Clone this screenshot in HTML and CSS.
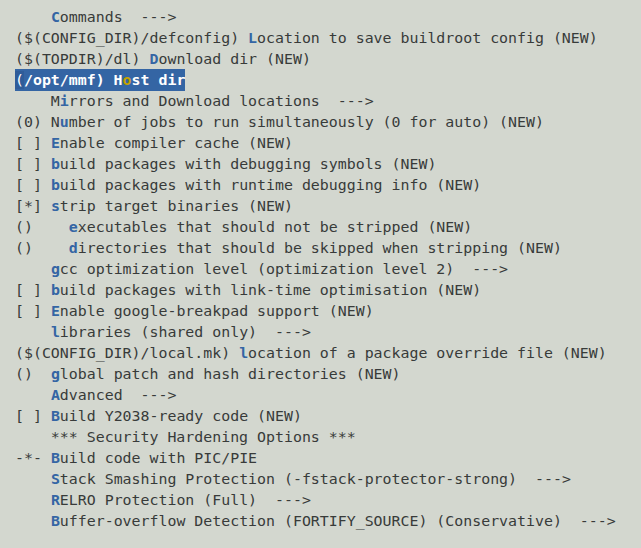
FILE: index.html
```html
<!DOCTYPE html>
<html>
<head>
<meta charset="utf-8">
<link rel="stylesheet" href="styles.css">
</head>
<body>
<div class="term">
<div class="row">    <span class="k">C</span>ommands  ---&gt;</div>
<div class="row">($(CONFIG_DIR)/defconfig) <span class="k">L</span>ocation to save buildroot config (NEW)</div>
<div class="row">($(TOPDIR)/dl) <span class="k">D</span>ownload dir (NEW)</div>
<div class="row"><span class="sel"><span class="cur">(</span>/opt/mmf) H<span class="sk">o</span>st dir</span></div>
<div class="row">    M<span class="k">i</span>rrors and Download locations  ---&gt;</div>
<div class="row">(0) N<span class="k">u</span>mber of jobs to run simultaneously (0 for auto) (NEW)</div>
<div class="row">[ ] <span class="k">E</span>nable compiler cache (NEW)</div>
<div class="row">[ ] <span class="k">b</span>uild packages with debugging symbols (NEW)</div>
<div class="row">[ ] <span class="k">b</span>uild packages with runtime debugging info (NEW)</div>
<div class="row">[*] <span class="k">s</span>trip target binaries (NEW)</div>
<div class="row">()    <span class="k">e</span>xecutables that should not be stripped (NEW)</div>
<div class="row">()    <span class="k">d</span>irectories that should be skipped when stripping (NEW)</div>
<div class="row">    <span class="k">g</span>cc optimization level (optimization level 2)  ---&gt;</div>
<div class="row">[ ] <span class="k">b</span>uild packages with link-time optimisation (NEW)</div>
<div class="row">[ ] <span class="k">E</span>nable google-breakpad support (NEW)</div>
<div class="row">    <span class="k">l</span>ibraries (shared only)  ---&gt;</div>
<div class="row">($(CONFIG_DIR)/local.mk) <span class="k">l</span>ocation of a package override file (NEW)</div>
<div class="row">()  <span class="k">g</span>lobal patch and hash directories (NEW)</div>
<div class="row">    <span class="k">A</span>dvanced  ---&gt;</div>
<div class="row">[ ] <span class="k">B</span>uild Y2038-ready code (NEW)</div>
<div class="row">    *** Security Hardening Options ***</div>
<div class="row">-*- <span class="k">B</span>uild code with PIC/PIE</div>
<div class="row">    <span class="k">S</span>tack Smashing Protection (-fstack-protector-strong)  ---&gt;</div>
<div class="row">    <span class="k">R</span>ELRO Protection (Full)  ---&gt;</div>
<div class="row">    <span class="k">B</span>uffer-overflow Detection (FORTIFY_SOURCE) (Conservative)  ---&gt;</div>
</div>
</body>
</html>
```

FILE: styles.css
```css
html, body {
  margin: 0;
  padding: 0;
  background: #d3d7cf;
}
.term {
  padding: 7px 0 0 15px;
  font-family: "DejaVu Sans Mono", monospace;
  font-size: 14.9px;
  line-height: 21px;
  color: #383b3a;
}
.row {
  white-space: pre;
  height: 21px;
}
.k {
  color: #3465a4;
  font-weight: bold;
}
.sel {
  display: inline-block;
  background: #3465a4;
  color: #ffffff;
  font-weight: bold;
  height: 22px;
  margin-top: -1px;
  line-height: 23px;
}
.cur {
  font-weight: normal;
  background: #2f5c99;
}
.sk {
  color: #c4a000;
}
```
